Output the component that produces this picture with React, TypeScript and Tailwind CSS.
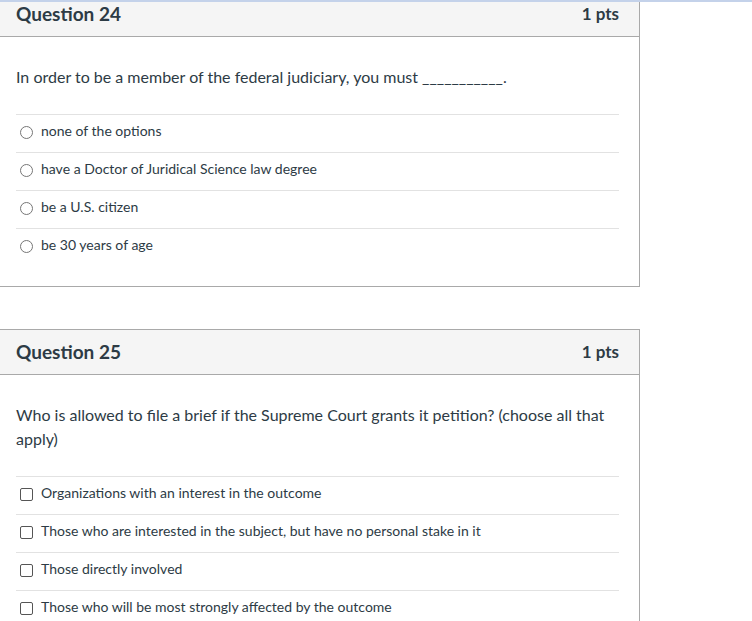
import React from "react";

type Question = {
  num: number;
  text: string;
  kind: "radio" | "checkbox";
  answers: string[];
};

const questions: Question[] = [
  {
    num: 24,
    text: "In order to be a member of the federal judiciary, you must ___________.",
    kind: "radio",
    answers: [
      "none of the options",
      "have a Doctor of Juridical Science law degree",
      "be a U.S. citizen",
      "be 30 years of age",
    ],
  },
  {
    num: 25,
    text: "Who is allowed to file a brief if the Supreme Court grants it petition? (choose all that apply)",
    kind: "checkbox",
    answers: [
      "Organizations with an interest in the outcome",
      "Those who are interested in the subject, but have no personal stake in it",
      "Those directly involved",
      "Those who will be most strongly affected by the outcome",
    ],
  },
];

function QuestionCard({ q, className = "" }: { q: Question; className?: string }) {
  return (
    <div className={`w-[640px] border-y border-r border-[#a9a9a9] bg-white ${className}`}>
      <div className="flex h-[45px] items-center justify-between border-b border-[#a9a9a9] bg-[#f5f5f5] pl-4 pr-5">
        <span className="text-[19px] font-bold text-[#2d3b45]">Question {q.num}</span>
        <span className="text-[17px] font-bold text-[#2d3b45]">1 pts</span>
      </div>
      <div className="pl-4 pr-5 pt-[28px] pb-[20px]">
        <p className="text-[16px] leading-6 text-[#2d3b45]">{q.text}</p>
        <ul className="mt-[25px]">
          {q.answers.map((a) => (
            <li
              key={a}
              className="flex items-center gap-2 border-t border-[#e2e2e2] pl-[4px] pt-[6px] pb-[11px] text-[14px] leading-5 text-[#2d3b45]"
            >
              {q.kind === "radio" ? (
                <span className="mt-[2px] h-[13px] w-[13px] shrink-0 rounded-full border border-[#767676] bg-white" />
              ) : (
                <span className="mt-[2px] h-[13px] w-[13px] shrink-0 rounded-[2px] border border-[#555] bg-white" />
              )}
              <span>{a}</span>
            </li>
          ))}
        </ul>
      </div>
    </div>
  );
}

export default function App() {
  return (
    <div
      className="relative h-[621px] w-[752px] overflow-hidden bg-white"
      style={{ fontFamily: "Lato, 'Liberation Sans', sans-serif" }}
    >
      <div className="absolute left-0 right-0 top-0 z-10 h-[2px] bg-[#c4d2ea]" />
      <QuestionCard q={questions[0]} className="-mt-[9px]" />
      <QuestionCard q={questions[1]} className="mt-[42px]" />
    </div>
  );
}
